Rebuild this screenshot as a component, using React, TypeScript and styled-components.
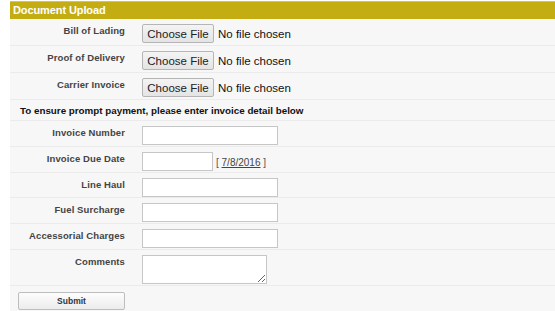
import styled, { createGlobalStyle } from "styled-components";

const GlobalStyle = createGlobalStyle`
  body {
    margin: 0;
    background: #ffffff;
    font-family: "Liberation Sans", Arial, sans-serif;
  }
`;

const fileFields = ["Bill of Lading", "Proof of Delivery", "Carrier Invoice"];
const textFields = ["Fuel Surcharge", "Accessorial Charges"];

export default function App() {
  return (
    <>
      <GlobalStyle />
      <Panel>
        <Header>Document Upload</Header>

        {fileFields.map((name) => (
          <Row key={name} $height={27}>
            <Label>{name}</Label>
            <FileBox>
              <FileButton type="button">Choose File</FileButton>
              <FileStatus>No file chosen</FileStatus>
            </FileBox>
          </Row>
        ))}

        <Notice>To ensure prompt payment, please enter invoice detail below</Notice>

        <Row $height={26}>
          <Label>Invoice Number</Label>
          <TextInput type="text" />
        </Row>
        <Row $height={26}>
          <Label>Invoice Due Date</Label>
          <DateBox>
            <TextInput type="text" $width={71} />
            <DateHint>
              [ <a href="#">7/8/2016</a> ]
            </DateHint>
          </DateBox>
        </Row>
        <Row $height={25}>
          <Label>Line Haul</Label>
          <TextInput type="text" />
        </Row>
        {textFields.map((name) => (
          <Row key={name} $height={26}>
            <Label>{name}</Label>
            <TextInput type="text" />
          </Row>
        ))}
        <Row $height={36}>
          <Label>Comments</Label>
          <Comments />
        </Row>

        <Footer>
          <SubmitButton type="button">Submit</SubmitButton>
        </Footer>
      </Panel>
    </>
  );
}

const Panel = styled.div`
  margin: 1px 0 0 10px;
  background: #f7f7f7;
  min-height: 310px;
`;

const Header = styled.div`
  height: 18px;
  background: #c4ad12;
  border-top: 1px solid #d9c83a;
  box-sizing: border-box;
  color: #ffffff;
  font-size: 11px;
  font-weight: bold;
  line-height: 17px;
  padding-left: 3px;
  letter-spacing: -0.1px;
`;

const Row = styled.div<{ $height: number }>`
  display: grid;
  grid-template-columns: 115px 1fr;
  column-gap: 17px;
  height: ${(p) => p.$height}px;
  box-sizing: border-box;
  border-bottom: 1px solid #ebebeb;
  padding-top: 5px;
`;

const Label = styled.div`
  text-align: right;
  font-size: 9.5px;
  font-weight: bold;
  color: #444444;
  padding-top: 1px;
  line-height: 12px;
  letter-spacing: 0.1px;
`;

const FileBox = styled.div`
  display: flex;
  align-items: center;
  gap: 4px;
  height: 19px;
`;

const FileButton = styled.button`
  width: 72px;
  height: 19px;
  padding: 0;
  font-family: "Liberation Sans", Arial, sans-serif;
  font-size: 11.5px;
  color: #222222;
  background: linear-gradient(#f4f4f4, #e4e4e4);
  border: 1px solid #b5b5b5;
  border-radius: 2px;
`;

const FileStatus = styled.span`
  font-size: 11.5px;
  color: #111111;
`;

const Notice = styled.div`
  height: 21px;
  box-sizing: border-box;
  border-bottom: 1px solid #ebebeb;
  padding: 5px 0 0 10px;
  font-size: 9.8px;
  font-weight: bold;
  color: #111111;
  line-height: 12px;
`;

const TextInput = styled.input<{ $width?: number }>`
  width: ${(p) => p.$width ?? 136}px;
  height: 19px;
  box-sizing: border-box;
  margin: 0;
  border: 1px solid #c6c6c6;
  background: #ffffff;
`;

const DateBox = styled.div`
  display: flex;
  align-items: center;
  gap: 3px;
  height: 19px;
`;

const DateHint = styled.span`
  font-size: 10px;
  color: #555555;
  padding-top: 2px;

  a {
    color: #444444;
  }
`;

const Comments = styled.textarea`
  width: 125px;
  height: 29px;
  box-sizing: border-box;
  margin: 0;
  border: 1px solid #c6c6c6;
  background: #ffffff;
  resize: both;
`;

const Footer = styled.div`
  padding: 4px 0 0 8px;
`;

const SubmitButton = styled.button`
  width: 107px;
  height: 18px;
  padding: 0;
  font-family: "Liberation Sans", Arial, sans-serif;
  font-size: 8.5px;
  font-weight: bold;
  color: #333333;
  background: linear-gradient(#fdfdfd, #ececec);
  border: 1px solid #bdbdbd;
  border-radius: 2px;
`;
